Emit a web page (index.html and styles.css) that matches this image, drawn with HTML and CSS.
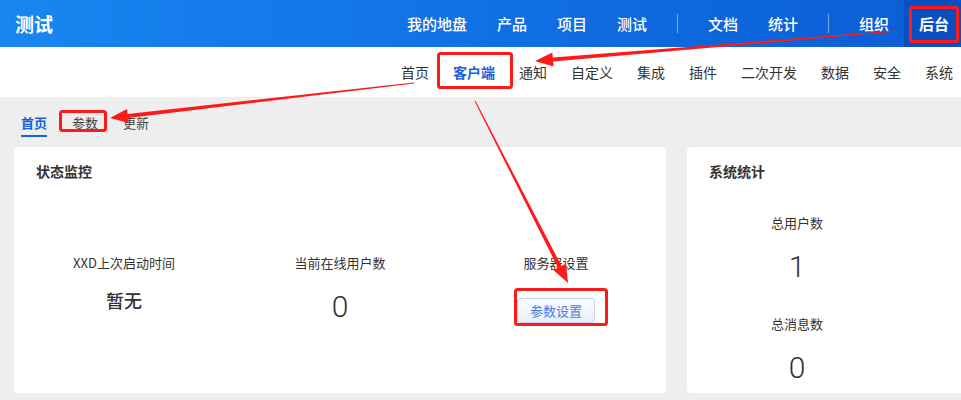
FILE: index.html
```html
<!DOCTYPE html>
<html lang="zh-CN">
<head>
  <meta charset="UTF-8" />
  <meta name="viewport" content="width=device-width, initial-scale=1.0"/>
  <title>后台 - 客户端</title>
  <link rel="stylesheet" href="styles.css">
</head>
<body>
  <div class="app">
    <!-- 顶部主导航 -->
    <header class="topbar">
      <div class="brand">测试</div>
      <nav class="main-nav">
        <a class="main-item">我的地盘</a>
        <a class="main-item">产品</a>
        <a class="main-item">项目</a>
        <a class="main-item">测试</a>
        <span class="divider"></span>
        <a class="main-item">文档</a>
        <a class="main-item">统计</a>
        <span class="divider"></span>
        <a class="main-item">组织</a>
        <a class="main-item active">后台</a>
      </nav>
    </header>

    <!-- 后台二级菜单 -->
    <nav class="sub-nav">
      <a class="sub-item">首页</a>
      <a class="sub-item active">客户端</a>
      <a class="sub-item">通知</a>
      <a class="sub-item">自定义</a>
      <a class="sub-item">集成</a>
      <a class="sub-item">插件</a>
      <a class="sub-item">二次开发</a>
      <a class="sub-item">数据</a>
      <a class="sub-item">安全</a>
      <a class="sub-item">系统</a>
    </nav>

    <div class="tabs">
      <a class="tab active">首页</a>
      <a class="tab">参数</a>
      <a class="tab">更新</a>
    </div>

    <main class="dashboard">
      <section class="card">
        <h3 class="card-title">状态监控</h3>
        <div class="stat-row">
          <div class="stat">
            <div class="stat-label">XXD上次启动时间</div>
            <div class="stat-value text">暂无</div>
          </div>
          <div class="stat">
            <div class="stat-label">当前在线用户数</div>
            <div class="stat-value">0</div>
          </div>
          <div class="stat">
            <div class="stat-label">服务器设置</div>
            <button class="btn-setting">参数设置</button>
          </div>
        </div>
      </section>

      <section class="card">
        <h3 class="card-title">系统统计</h3>
        <div class="stat-col">
          <div class="stat">
            <div class="stat-label">总用户数</div>
            <div class="stat-value">1</div>
          </div>
          <div class="stat">
            <div class="stat-label">总消息数</div>
            <div class="stat-value">0</div>
          </div>
        </div>
      </section>
    </main>

    <!-- 红色标注：框和箭头 -->
    <svg class="marks" width="961" height="400" viewBox="0 0 961 400">
      <g fill="none" stroke="#ff1a1a" stroke-width="3">
        <rect x="910.5" y="7.5" width="47" height="34" rx="2" />
        <rect x="438.5" y="53.5" width="73" height="34" rx="2" />
        <rect x="60.5" y="111.5" width="45" height="19" rx="2" />
        <rect x="515.5" y="289.5" width="91" height="35" rx="2" />
      </g>
      <g fill="#ff1a1a">
        <polygon points="895.96,30.5 552.77,57.52 552.36,52.53 535,61 553.52,66.49 553.11,61.5 896.04,31.5" />
        <polygon points="413.94,82.5 127.65,113.95 127.08,108.99 110,118 128.68,122.89 128.11,117.93 414.06,83.5" />
        <polygon points="474.55,101.23 558.03,267.88 553.58,270.16 568,283 566.04,263.78 561.59,266.06 475.45,100.77" />
      </g>
    </svg>
  </div>
</body>
</html>
```

FILE: styles.css
```css
body {
  margin: 0;
  overflow: hidden;
  background: #eeeeee;
  font-family: "Noto Sans CJK SC", "Noto Sans", sans-serif;
  color: #333;
}

.app {
  position: relative;
  width: 980px;
}

a {
  cursor: pointer;
}

/* 顶栏 */
.topbar {
  display: flex;
  align-items: center;
  height: 47px;
  padding: 0 16px 0 15px;
  background: linear-gradient(90deg, #1886f1, #0d68dd 70%, #0b5cd5);
  color: white;
}

.brand {
  font-size: 19px;
  font-weight: 700;
}

.main-nav {
  display: flex;
  align-items: center;
  height: 100%;
  margin-left: auto;
}

.main-item {
  display: flex;
  align-items: center;
  height: 100%;
  padding: 0 15px;
  font-size: 15px;
  font-weight: 500;
}

.main-item.active {
  background: #0a4fc2;
  font-weight: 700;
}

.divider {
  width: 1px;
  height: 19px;
  margin: 0 15px;
  background: rgba(255, 255, 255, 0.45);
}

/* 二级菜单 */
.sub-nav {
  display: flex;
  justify-content: flex-end;
  align-items: center;
  height: 50px;
  padding-right: 15px;
  background: white;
}

.sub-item {
  padding: 0 12px;
  font-size: 14px;
  color: #333;
}

.sub-item.active {
  color: #1a5fdc;
  font-weight: 700;
}

/* 页签 */
.tabs {
  display: flex;
  gap: 25px;
  padding: 16px 21px 0;
}

.tab {
  font-size: 13px;
  line-height: 20px;
  padding-bottom: 2px;
  border-bottom: 2px solid transparent;
  color: #444;
}

.tab.active {
  color: #1263e0;
  font-weight: 700;
  border-bottom-color: #1263e0;
}

/* 卡片 */
.dashboard {
  display: grid;
  grid-template-columns: 652px 1fr;
  gap: 21px;
  margin-top: 10px;
  padding: 0 14px;
}

.card {
  box-sizing: border-box;
  height: 246px;
  padding: 14px 2px 0;
  background: white;
  border-radius: 4px;
}

.card-title {
  margin: 0;
  padding: 0 20px;
  font-size: 14px;
  line-height: 20px;
  font-weight: 700;
  color: #333;
}

.stat-row {
  display: grid;
  grid-template-columns: repeat(3, 216px);
  margin-top: 72px;
}

.stat-col {
  display: grid;
  gap: 27px;
  width: 216px;
  margin-top: 32px;
}

.stat {
  display: flex;
  flex-direction: column;
  align-items: center;
}

.stat-label {
  font-size: 13px;
  line-height: 20px;
  color: #333;
}

.stat-value {
  margin-top: 14px;
  font-family: Roboto, "Liberation Sans", sans-serif;
  font-size: 30px;
  font-weight: 300;
  line-height: 40px;
  color: #333;
}

.stat-value.text {
  font-family: "Noto Sans CJK SC", sans-serif;
  font-size: 18px;
  line-height: 26px;
  font-weight: 500;
}

.btn-setting {
  margin-top: 25px;
  height: 25px;
  padding: 0 12px;
  font-family: "Noto Sans CJK SC", sans-serif;
  font-size: 13px;
  color: #4b7be0;
  background: linear-gradient(#fbfcff, #e8effb);
  border: 1px solid #c9d5ea;
  border-radius: 3px;
  cursor: pointer;
}

/* 标注层 */
.marks {
  position: absolute;
  top: 0;
  left: 0;
  pointer-events: none;
}
```
